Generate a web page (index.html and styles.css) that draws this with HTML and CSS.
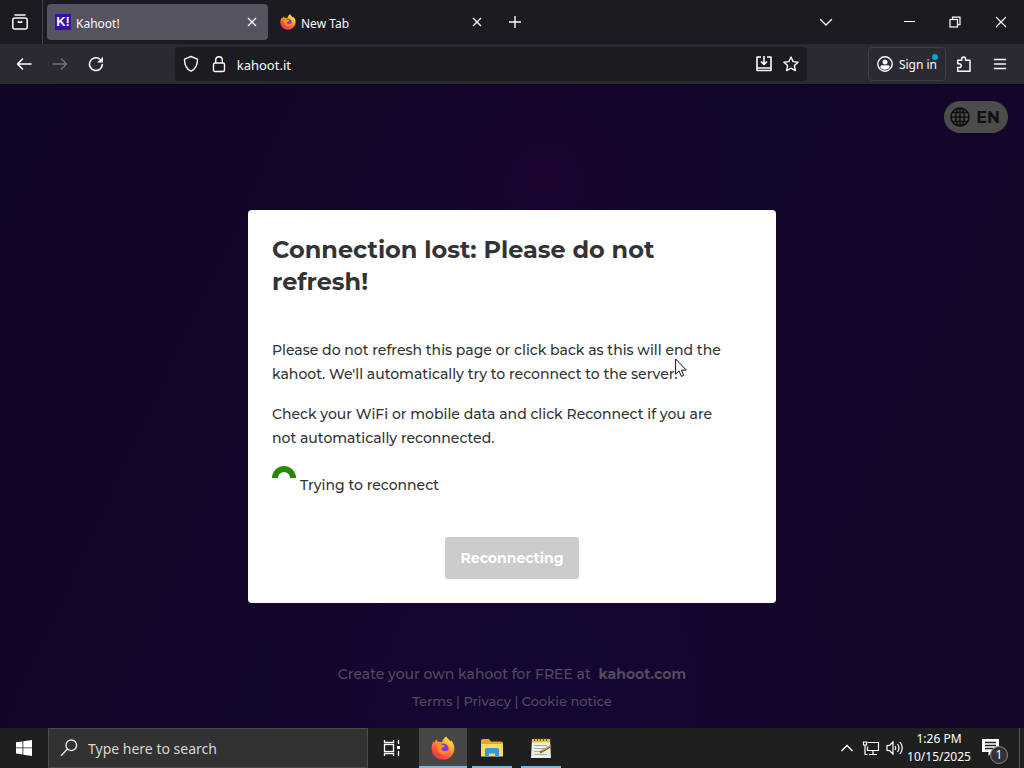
FILE: index.html
```html
<!DOCTYPE html>
<html lang="en">
<head>
<meta charset="utf-8">
<meta name="viewport" content="width=device-width, initial-scale=1">
<title>Kahoot!</title>
<link rel="stylesheet" href="styles.css">
</head>
<body>
<svg class="defs" width="0" height="0" aria-hidden="true">
  <defs>
    <linearGradient id="flame" x1="0.85" y1="0" x2="0.2" y2="1">
      <stop offset="0" stop-color="#fff04a"/><stop offset="0.4" stop-color="#ff9b26"/><stop offset="0.75" stop-color="#ff4a3d"/><stop offset="1" stop-color="#e62a6a"/>
    </linearGradient>
    <symbol id="firefox" viewBox="0 0 24 24">
      <path fill="url(#flame)" d="M15.2.4c1 2.2 3.2 3.6 4.400 5.200.500-.300.500-1 .300-1.700 2.400 2.400 3.700 5.600 3.500 9C23 19 18.200 23.600 12 23.600 5.700 23.600.700 18.900.600 12.700.500 9.900 1.200 7.200 2.600 5.200c.100.700.300 1.300.600 1.700.6-1.500 1.700-2.800 3-3.600-.1 1 .1 1.900.500 2.600 1.500-.3 3 0 4.200.700C11.300 4.200 13 1.700 15.200.4Z"/>
      <circle cx="12.300" cy="12.800" r="5.200" fill="#7540d8"/>
      <path fill="#ff9228" d="M6.200 8.600c1.700-1.200 3.800-.8 5.200.4 1 0 2.100.2 2.600.9-.7 1.400-2.400 1.600-3.600 2.100-.4 1.500.7 3 2.300 3.200 1.800.2 3-1.200 4.700-.7-1 2.500-3.200 4-5.800 3.800-3.600-.3-6.300-3.500-5.400-9.700Z"/>
      <path fill="#ffcf35" opacity="0.8" d="M15.200.4c1 2.200 3.200 3.600 4.400 5.200 2.300 3 2.700 7 .9 10.300.2-3.600-1-6.300-4-8.300-1.900-1.300-2.600-3.900-1.300-7.200Z"/>
    </symbol>
  </defs>
</svg>

<header class="browser">
  <div class="tabstrip">
    <button class="icon-btn view-btn" aria-label="Firefox View">
      <svg width="18" height="18" viewBox="0 0 18 18" fill="none" stroke="#fbfbfe" stroke-width="1.500" stroke-linecap="round"><path d="M4 2h10"/><rect x="1.800" y="5" width="14.400" height="11" rx="2"/><path d="M7.500 8.500v.7h3v-.7"/></svg>
    </button>
    <div class="tabs">
      <div class="tab tab-active">
        <span class="kahoot-icon" aria-hidden="true">K!</span>
        <span class="tab-title">Kahoot!</span>
        <button class="close-btn" aria-label="Close Kahoot! tab"><svg width="10" height="10" viewBox="0 0 10 10" stroke="#fbfbfe" stroke-width="1.300"><path d="M1 1l8 8M9 1l-8 8"/></svg></button>
      </div>
      <div class="tab">
        <svg width="16" height="16"><use href="#firefox"/></svg>
        <span class="tab-title">New Tab</span>
        <button class="close-btn" aria-label="Close New Tab"><svg width="10" height="10" viewBox="0 0 10 10" stroke="#fbfbfe" stroke-width="1.300"><path d="M1 1l8 8M9 1l-8 8"/></svg></button>
      </div>
      <button class="icon-btn" aria-label="Open a new tab"><svg width="14" height="14" viewBox="0 0 14 14" stroke="#fbfbfe" stroke-width="1.400"><path d="M7 1v12M1 7h12"/></svg></button>
    </div>
    <button class="icon-btn list-btn" aria-label="List all tabs"><svg width="14" height="14" viewBox="0 0 14 14" fill="none" stroke="#fbfbfe" stroke-width="1.400" stroke-linecap="round"><path d="M1.500 4.500L7 10l5.500-5.500"/></svg></button>
    <div class="window-controls">
      <button class="win-btn" aria-label="Minimize"><svg width="12" height="12" viewBox="0 0 12 12" stroke="#fff"><path d="M1 5.500h11"/></svg></button>
      <button class="win-btn" aria-label="Restore"><svg width="12" height="12" viewBox="0 0 12 12" fill="none" stroke="#fff" stroke-width="1.200"><rect x="1" y="3.500" width="7.500" height="7.500"/><path d="M3.500 3.500V1.200H11v7.500H8.500"/></svg></button>
      <button class="win-btn" aria-label="Close window"><svg width="12" height="12" viewBox="0 0 12 12" stroke="#fff" stroke-width="1.200"><path d="M1 1l10 10M11 1L1 11"/></svg></button>
    </div>
  </div>

  <div class="toolbar">
    <div class="nav-group">
      <button class="icon-btn" aria-label="Back"><svg width="16" height="16" viewBox="0 0 16 16" fill="none" stroke="#fbfbfe" stroke-width="1.600" stroke-linecap="round" stroke-linejoin="round"><path d="M15 8H1.500M6.500 3l-5 5 5 5"/></svg></button>
      <button class="icon-btn" aria-label="Forward" disabled><svg width="16" height="16" viewBox="0 0 16 16" fill="none" stroke="#74737d" stroke-width="1.400" stroke-linecap="round" stroke-linejoin="round"><path d="M1 8h13.500M9.500 3l5 5-5 5"/></svg></button>
      <button class="icon-btn" aria-label="Reload"><svg width="16" height="16" viewBox="0 0 16 16" fill="none" stroke="#fbfbfe" stroke-width="1.600" stroke-linecap="round"><path d="M14.300 8.500A6.400 6.400 0 1 1 11.600 2.900"/><path d="M15 .8v5.800H9.200Z" fill="#fbfbfe" stroke="none"/></svg></button>
    </div>
    <div class="urlbar">
      <svg width="16" height="18" viewBox="0 0 16 18" fill="none" stroke="#fbfbfe" stroke-width="1.400" stroke-linejoin="round"><path d="M8 1.500l6.500 2.700c0 5.600-1.700 9.800-6.500 12-4.800-2.200-6.500-6.400-6.500-12Z"/></svg>
      <svg width="16" height="18" viewBox="0 0 16 18" fill="none" stroke="#fbfbfe" stroke-width="1.400"><rect x="2.500" y="8" width="11" height="8.500" rx="1.500"/><path d="M4.700 8V5a3.300 3.300 0 0 1 6.600 0v3"/></svg>
      <input class="url-input" type="text" aria-label="Address" value="kahoot.it">
      <button class="url-btn" aria-label="Install page"><svg width="18" height="16" viewBox="0 0 18 16" fill="none" stroke="#fbfbfe" stroke-width="1.600" stroke-linejoin="round"><path d="M6 1H2v13.500h14V1h-4M2 12h14"/><path d="M9 0v8M6 5.500l3 3 3-3"/></svg></button>
      <button class="url-btn" aria-label="Bookmark"><svg width="16" height="16" viewBox="0 0 16 16" fill="none" stroke="#fbfbfe" stroke-width="1.400" stroke-linejoin="round"><path d="M8 1l2.100 4.600 5 .6-3.700 3.400 1 5L8 12.100l-4.400 2.500 1-5L.9 6.200l5-.6Z"/></svg></button>
    </div>
    <div class="action-group">
      <button class="signin">
        <svg width="16" height="16" viewBox="0 0 16 16"><circle cx="8" cy="8" r="7.200" fill="none" stroke="#fbfbfe" stroke-width="1.400"/><circle cx="8" cy="6" r="2.500" fill="#fbfbfe"/><path d="M3.600 12.300V10.200Q3.600 9.200 5 9.200H11Q12.400 9.200 12.400 10.200V12.300Q8 15 3.600 12.300Z" fill="#fbfbfe"/></svg>
        Sign in
        <span class="badge-dot"></span>
      </button>
      <button class="icon-btn" aria-label="Extensions"><svg width="16" height="16" viewBox="0 0 16 16" fill="none" stroke="#fbfbfe" stroke-width="1.500" stroke-linejoin="round"><path d="M1.700 5.500v-1.300h4V3a1.900 1.900 0 0 1 3.800 0v1.200h4.500v11H1.700v-3.600h1.600a1.900 1.900 0 0 0 0-3.800H1.700Z"/></svg></button>
      <button class="icon-btn" aria-label="Menu"><svg width="14" height="14" viewBox="0 0 14 14" stroke="#fbfbfe" stroke-width="1.400" stroke-linecap="round"><path d="M1.500 2.500h11M1.500 7h11M1.500 11.500h11"/></svg></button>
    </div>
  </div>
</header>

<main class="page">
  <button class="lang">
    <svg width="22" height="22" viewBox="0 0 22 22" fill="none" stroke="#111" stroke-width="1.600"><circle cx="11" cy="11" r="9"/><ellipse cx="11" cy="11" rx="4.300" ry="9"/><path d="M11 2v18M2 11h18M3.500 6.500h15M3.500 15.500h15"/></svg>
    EN
  </button>
  <footer class="page-footer">
    <p class="promo">Create your own kahoot for FREE at <a class="promo-link" href="#">kahoot.com</a></p>
    <p class="legal"><a href="#">Terms</a> | <a href="#">Privacy</a> | <a href="#">Cookie notice</a></p>
  </footer>
  <div class="overlay">
    <section class="dialog" role="dialog" aria-labelledby="dialog-title">
      <h1 class="dialog-title" id="dialog-title">Connection lost: Please do not refresh!</h1>
      <p class="dialog-text">Please do not refresh this page or click back as this will end the kahoot. We'll automatically try to reconnect to the server.</p>
      <p class="dialog-text">Check your WiFi or mobile data and click Reconnect if you are not automatically reconnected.</p>
      <div class="status">
        <svg width="24" height="24" viewBox="0 0 24 24" fill="none" stroke="#26890c" stroke-width="6"><path d="M3 12a9 9 0 0 1 18 0"/></svg>
        <span class="status-text">Trying to reconnect</span>
      </div>
      <button class="reconnect" disabled>Reconnecting</button>
      <svg class="cursor" width="13" height="20" viewBox="0 0 13 20" aria-hidden="true"><path d="M.6 1v15.200l3.500-3.300 2.300 5.500 2.300-1-2.300-5.300h4.900Z" fill="#fff" stroke="#111"/></svg>
    </section>
  </div>
</main>

<nav class="taskbar">
  <button class="task-btn" aria-label="Start"><svg width="16" height="16" viewBox="0 0 16 16" fill="#fff"><path d="M0 2.300L6.500 1.400v6.100H0ZM7.300 1.300L16 0v7.500H7.300ZM0 8.300h6.500v6.200L0 13.600ZM7.300 8.300H16V16l-8.700-1.300Z"/></svg></button>
  <label class="search">
    <svg width="18" height="18" viewBox="0 0 18 18" fill="none" stroke="#e4e4e4" stroke-width="1.400"><circle cx="11.300" cy="6.300" r="5.300"/><path d="M7.500 10L1 16.700"/></svg>
    <input class="search-input" type="text" placeholder="Type here to search" aria-label="Type here to search">
  </label>
  <button class="task-btn" aria-label="Task View"><svg width="18" height="16" viewBox="0 0 18 16" fill="none" stroke="#fff" stroke-width="1.300"><path d="M1.500 0v2.500h9V0M1.500 16v-2.500h9V16M15.500 0v4M15.500 11v5"/><rect x="1.500" y="4.500" width="9" height="7"/><rect x="14" y="6" width="3" height="3" fill="#fff" stroke="none"/></svg></button>
  <div class="apps">
    <button class="task-btn app app-active" aria-label="Firefox"><svg width="24" height="24"><use href="#firefox"/></svg></button>
    <button class="task-btn app" aria-label="File Explorer"><svg width="22" height="20" viewBox="0 0 22 20"><path fill="#e8a624" d="M0 2.500Q0 1 1.500 1H8l2 2.500h10.500Q22 3.500 22 5v13H0Z"/><path fill="#ffdb69" d="M0 6h22v12.500H0Z"/><path fill="#3a96dd" d="M4 11.500Q4 10 5.500 10h11q1.500 0 1.500 1.500V19h-4v-3.500H8V19H4Z"/></svg></button>
    <button class="task-btn app" aria-label="Notepad++"><svg width="22" height="22" viewBox="0 0 22 22"><path fill="#eeeee6" d="M2 2h18l1 19H1Z"/><path fill="#e4c62c" d="M2 2h18v3.500H2Z"/><path stroke="#554d25" stroke-width="1" d="M4.500 1v3M7.500 1v3M10.500 1v3M13.500 1v3M16.500 1v3"/><path stroke="#aaa" stroke-width="1" d="M4 8.500h13M4 11.500h11M4 14.500h6M4 17.500h13"/><path stroke="#8b6331" stroke-width="2.500" d="M21 9l-11 6.500"/><path stroke="#e0bd79" stroke-width="1" d="M20.500 8.500l-9 5.500"/></svg></button>
  </div>
  <div class="tray">
    <button class="tray-btn" aria-label="Show hidden icons"><svg width="14" height="10" viewBox="0 0 14 10" fill="none" stroke="#fff" stroke-width="1.300"><path d="M1.500 8L7 2.500 12.500 8"/></svg></button>
    <button class="tray-btn" aria-label="Network"><svg width="18" height="16" viewBox="0 0 18 16" fill="none" stroke="#fff" stroke-width="1.200"><path d="M5.500 2.500h11v8h-11v-4M11 10.500v3.500M7 14.500h8"/><path d="M1.500 2v3h3V2ZM3 5v9.500h2.500"/></svg></button>
    <button class="tray-btn" aria-label="Volume"><svg width="18" height="16" viewBox="0 0 18 16" fill="none" stroke="#fff" stroke-width="1.200"><path d="M1 5.500h2.500L7 2v12l-3.500-3.500H1ZM9 6q1.500 2 0 4M11.500 4q3 4 0 8M14 2q4.500 6 0 12"/></svg></button>
    <div class="clock"><span>1:26 PM</span><span>10/15/2025</span></div>
    <button class="notify" aria-label="1 new notification">
      <svg width="18" height="18" viewBox="0 0 18 18"><path fill="#fff" d="M0 0h17v13h-7l-3.500 4v-4H0Z"/><path stroke="#222" stroke-width="1.300" d="M3 3.500h11M3 6.500h11M3 9.500h8"/></svg>
      <span class="count">1</span>
    </button>
  </div>
</nav>
</body>
</html>
```
FILE: styles.css
```css
* { box-sizing: border-box; }
html, body { height: 100%; }
body {
  margin: 0;
  display: flex;
  flex-direction: column;
  overflow: hidden;
  background: #130629;
  font-family: "Segoe UI", "Noto Sans", sans-serif;
  font-size: 12px;
  color: #fbfbfe;
}
button, input { font: inherit; color: inherit; border: 0; background: none; padding: 0; margin: 0; }
svg { display: block; flex: none; }
a { color: inherit; text-decoration: none; }
.defs { position: absolute; }

/* Browser chrome */
.browser { flex: none; }
.tabstrip { display: flex; align-items: center; height: 44px; background: #1c1b22; }
.icon-btn { display: grid; place-items: center; width: 36px; height: 36px; flex: none; }
.view-btn { width: 43px; height: 44px; padding-right: 2px; border-right: 1px solid #45444e; }
.tabs { display: flex; align-items: center; gap: 4px; flex: 1; min-width: 0; padding-left: 4px; }
.tab { display: flex; align-items: center; gap: 5px; flex: 0 1 221px; min-width: 0; height: 36px; padding: 0 8px; border-radius: 4px; }
.tab-active { background: #555360; }
.tab-title { flex: 1; padding-top: 2px; }
.kahoot-icon {
  display: grid; place-items: center; width: 16px; height: 16px;
  background: #3b0fa0; font-family: "Liberation Sans", Arial, sans-serif;
  font-size: 13px; font-weight: 700; line-height: 16px;
}
.close-btn { display: grid; place-items: center; width: 16px; height: 24px; }
.list-btn { margin-right: 42px; }
.window-controls { display: flex; }
.win-btn { display: grid; place-items: center; width: 46px; height: 36px; }

.toolbar { display: flex; align-items: center; height: 40px; padding: 0 6px; background: #2b2a33; }
.nav-group, .action-group { display: flex; align-items: center; }
.urlbar { display: flex; align-items: center; gap: 12px; flex: 1; min-width: 0; height: 34px; margin: 0 6%; padding: 0 8px; border-radius: 4px; background: #1c1b22; }
.url-input { flex: 1; min-width: 0; height: 32px; margin-left: -2px; padding-top: 2px; font-size: 13px; }
.url-btn { display: grid; place-items: center; width: 16px; height: 24px; }
.signin {
  position: relative; display: flex; align-items: center; gap: 6px; height: 34px;
  padding: 0 8px; border: 1px solid #3e3d48; border-radius: 4px;
}
.badge-dot { position: absolute; top: 6px; right: 7px; width: 6px; height: 6px; border-radius: 50%; background: #00a5c8; }

/* Web page */
.page {
  position: relative; display: flex; flex-direction: column; justify-content: space-between;
  flex: 1; min-height: 0; padding: 16px 16px 15px;
  font-family: Montserrat, Inter, sans-serif;
  background:
    radial-gradient(ellipse at 53% 15%, #190430 0, #19043000 24%),
    radial-gradient(ellipse at 53% 95%, #140634 0, #14063400 40%),
    linear-gradient(115deg, #120626 0, #13062c 50%, #130628 100%);
  border-top: 1px solid #0d0518;
}
.lang {
  display: flex; align-items: center; gap: 5px; align-self: flex-end;
  height: 32px; padding: 0 8px 0 5px; border-radius: 16px;
  background: #4c4c4c; color: #111; font-size: 16px; font-weight: 700;
}
.page-footer { text-align: center; color: #54495f; }
.promo { margin: 0 0 3px; font-size: 14px; font-weight: 500; line-height: 24px; }
.promo-link { margin-left: 4px; font-weight: 700; }
.legal { margin: 0; font-size: 13px; font-weight: 500; line-height: 24px; }
.overlay { position: absolute; inset: 0; display: flex; align-items: center; justify-content: center; }
.dialog {
  position: relative; width: 528px; max-width: 100%; padding: 24px;
  border-radius: 4px; background: #fff; color: #333;
}
.dialog-title { margin: 0 0 40px; font-size: 24px; font-weight: 700; line-height: 32px; }
.dialog-text { max-width: 464px; margin: 0 0 16px; font-size: 14px; font-weight: 500; line-height: 24px; }
.status { display: flex; gap: 4px; }
.status-text { padding-top: 7px; font-size: 14px; font-weight: 500; line-height: 24px; }
.reconnect {
  display: block; margin: 40px auto 0; padding: 0 16px; height: 42px;
  border-radius: 3px; background: #ccc; color: #fff; font-size: 14px; font-weight: 700;
}
.cursor { position: absolute; left: 427px; top: 148px; }

/* Desktop taskbar */
.taskbar { display: flex; align-items: stretch; flex: none; height: 40px; background: #1f1f1f; color: #fff; }
.task-btn { display: grid; place-items: center; width: 48px; flex: none; }
.search { display: flex; align-items: center; gap: 10px; flex: 0 1 320px; min-width: 0; padding: 0 11px; background: #323232; border: 1px solid #4b4b4b; }
.search-input { flex: 1; min-width: 0; font-size: 14px; }
.search-input::placeholder { color: #d6d6d6; opacity: 1; }
.apps { display: flex; gap: 1px; padding-left: 3px; }
.app::after { content: ""; align-self: end; grid-area: 1 / 1; width: 40px; height: 2px; background: #76b9ed; }
.app svg { grid-area: 1 / 1; }
.app-active { background: #474747; }
.app-active::after { width: 48px; }
.tray { display: flex; align-items: center; margin-left: auto; margin-right: 4px; padding-right: 8px; border-right: 1px solid #555; }
.tray-btn { display: grid; place-items: center; width: 24px; height: 40px; }
.clock { display: flex; flex-direction: column; align-items: center; width: 64px; line-height: 18px; }
.notify { position: relative; display: grid; place-items: center; width: 40px; height: 40px; }
.count {
  position: absolute; left: 19px; top: 18px; width: 18px; height: 18px; border: 1px solid #888;
  border-radius: 50%; background: #333; font-size: 12px; line-height: 16px; text-align: center;
}
```
